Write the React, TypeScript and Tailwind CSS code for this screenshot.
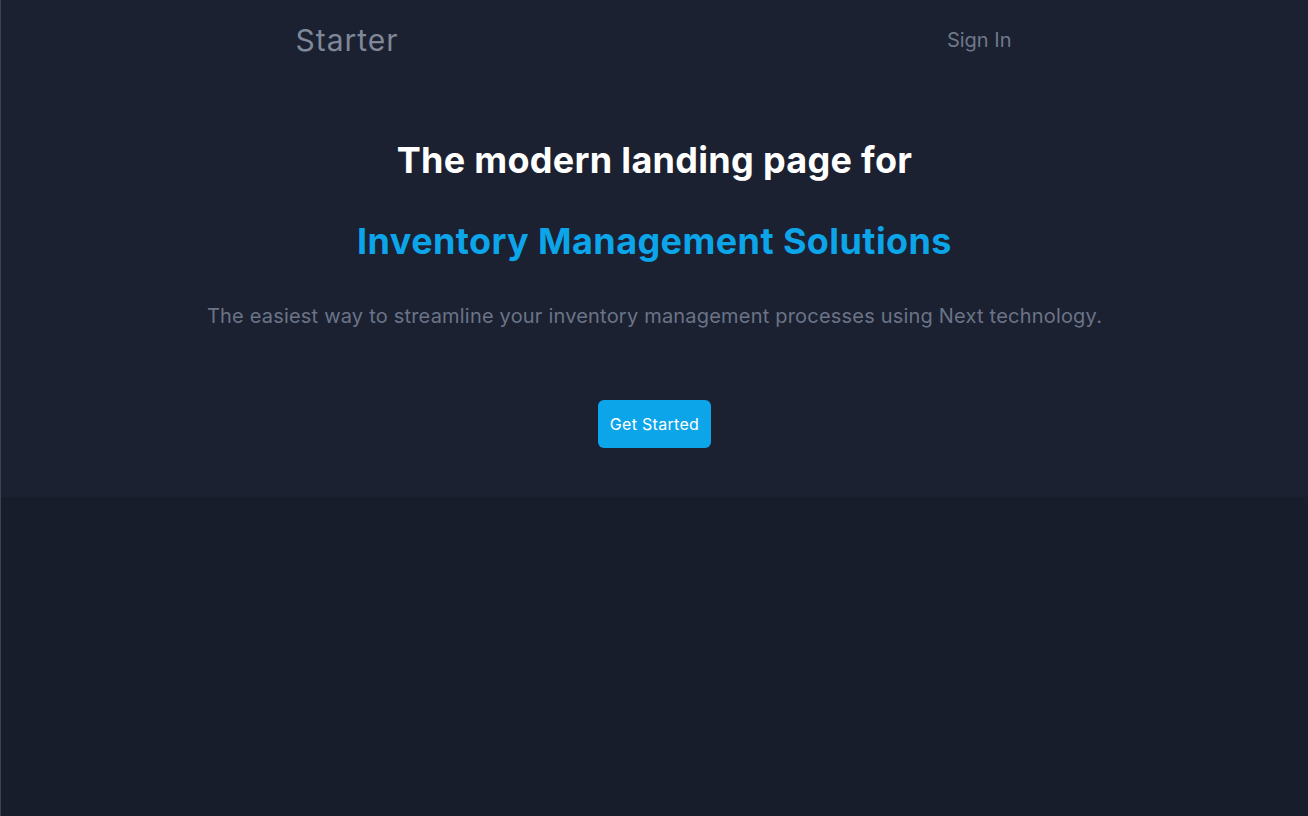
export default function App() {
    return (
        <div
            className="min-h-[816px] bg-[#181d2c] border-l border-[#3c4250]"
            style={{ fontFamily: "Inter, 'Noto Sans', sans-serif" }}
        >
            <div className="bg-[#1b2131]">
                <header className="mx-auto flex h-20 max-w-3xl items-center justify-between px-6">
                    <a className="pl-px text-3xl tracking-[1px] text-[#7f8899]">Starter</a>
                    <a className="pr-[3px] text-xl text-[#6f7889]">Sign In</a>
                </header>
                <section className="flex flex-col items-center pt-[60px] pb-[49px] text-center">
                    <h1 className="text-4xl font-bold tracking-[0.3px] text-white">
                        The modern landing page for
                    </h1>
                    <h2 className="mt-[41px] text-4xl font-bold tracking-[0.4px] text-[#0ca5ea]">
                        Inventory Management Solutions
                    </h2>
                    <p className="mt-[41px] text-xl tracking-[0.2px] text-[#6b7487]">
                        The easiest way to streamline your inventory management processes using Next technology.
                    </p>
                    <button className="mt-[70px] rounded-md bg-[#0ca5ea] px-3 py-3 text-base tracking-[0.3px] text-white">
                        Get Started
                    </button>
                </section>
            </div>
        </div>
    );
}
